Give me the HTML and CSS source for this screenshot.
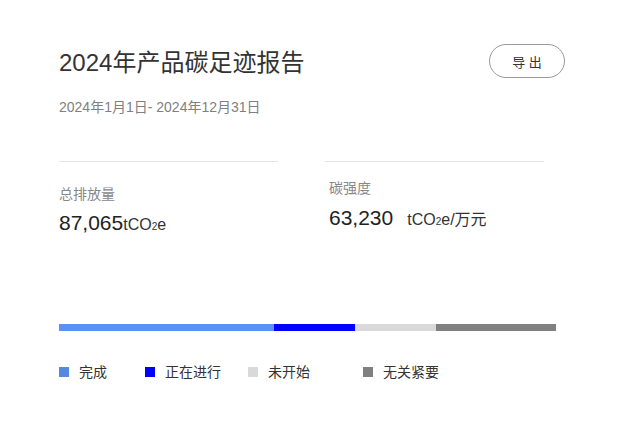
FILE: index.html
```html
<!DOCTYPE html>
<html lang="zh-CN">
  <head>
    <meta charset="UTF-8" />
    <meta name="viewport" content="width=device-width, initial-scale=1.0" />
    <title>2024年产品碳足迹报告</title>
    <link rel="stylesheet" href="styles.css">
  </head>

  <body>
    <div class="report">
      <div class="header">
        <h1 class="title">2024年产品碳足迹报告</h1>
        <button class="export-btn">导 出</button>
      </div>
      <div class="period">2024年1月1日- 2024年12月31日</div>

      <div class="stats">
        <div class="stat">
          <div class="stat-label">总排放量</div>
          <div class="stat-value">87,065<span class="unit">tCO<span class="sub">2</span>e</span></div>
        </div>
        <div class="stat stat-alt">
          <div class="stat-label">碳强度</div>
          <div class="stat-value">63,230<span class="unit unit-gap">tCO<span class="sub">2</span>e/万元</span></div>
        </div>
      </div>

      <div class="progress">
        <div class="seg seg-done" style="width: 43.3%"></div>
        <div class="seg seg-doing" style="width: 16.3%"></div>
        <div class="seg seg-todo" style="width: 16.3%"></div>
        <div class="seg seg-skip" style="width: 24.1%"></div>
      </div>

      <ul class="legend">
        <li class="legend-item item-done"><span class="dot dot-done"></span>完成</li>
        <li class="legend-item item-doing"><span class="dot dot-doing"></span>正在进行</li>
        <li class="legend-item item-todo"><span class="dot dot-todo"></span>未开始</li>
        <li class="legend-item"><span class="dot dot-skip"></span>无关紧要</li>
      </ul>
    </div>
  </body>
</html>
```

FILE: styles.css
```css
body {
  margin: 0;
  background-color: #fff;
  font-family: "Liberation Sans", Arial, "Noto Sans CJK SC", sans-serif;
  color: #333;
}

.report {
  padding: 47px 59px 0 59px;
}

.header {
  display: flex;
  justify-content: space-between;
  align-items: flex-start;
}

.title {
  margin: 0;
  font-size: 24px;
  font-weight: normal;
  line-height: 32px;
  color: #333;
}

.export-btn {
  margin-top: -3px;
  width: 76px;
  height: 34px;
  border: 1px solid #999;
  border-radius: 17px;
  background-color: #fff;
  color: #333;
  font-family: inherit;
  font-size: 13px;
  padding: 0;
  cursor: pointer;
}

.period {
  margin-top: 19px;
  font-size: 14px;
  line-height: 18px;
  color: #808080;
}

.stats {
  display: flex;
  gap: 47px;
  margin-top: 45px;
}

.stat {
  width: 219px;
  border-top: 1px solid #e4e4e4;
  padding-top: 23px;
}

.stat-alt {
  padding: 17px 0 0 4px;
  box-sizing: border-box;
}

.stat-label {
  font-size: 14px;
  line-height: 18px;
  color: #888;
}

.stat-value {
  margin-top: 7px;
  font-size: 21px;
  line-height: 26px;
  color: #222;
}

.stat-alt .stat-value {
  margin-top: 8px;
}

.unit {
  font-size: 16px;
  color: #333;
}

.unit-gap {
  margin-left: 14px;
}

.sub {
  font-size: 10px;
}

.progress {
  display: flex;
  width: 497px;
  height: 7px;
  margin-top: 84px;
}

.seg {
  height: 100%;
}

.seg-done {
  background-color: #5b8ff9;
}

.seg-doing {
  background-color: #0000ff;
}

.seg-todo {
  background-color: #d9d9d9;
}

.seg-skip {
  background-color: #808080;
}

.legend {
  display: flex;
  list-style: none;
  margin: 32px 0 0 0;
  padding: 0;
}

.legend-item {
  display: flex;
  align-items: center;
  gap: 10px;
  font-size: 14px;
  line-height: 18px;
  color: #333;
}

.item-done {
  width: 86px;
}

.item-doing {
  width: 103px;
}

.item-todo {
  width: 115px;
}

.dot {
  width: 10px;
  height: 10px;
}

.dot-done {
  background-color: #5588e3;
}

.dot-doing {
  background-color: #0000ff;
}

.dot-todo {
  background-color: #d9d9d9;
}

.dot-skip {
  background-color: #808080;
}
```
